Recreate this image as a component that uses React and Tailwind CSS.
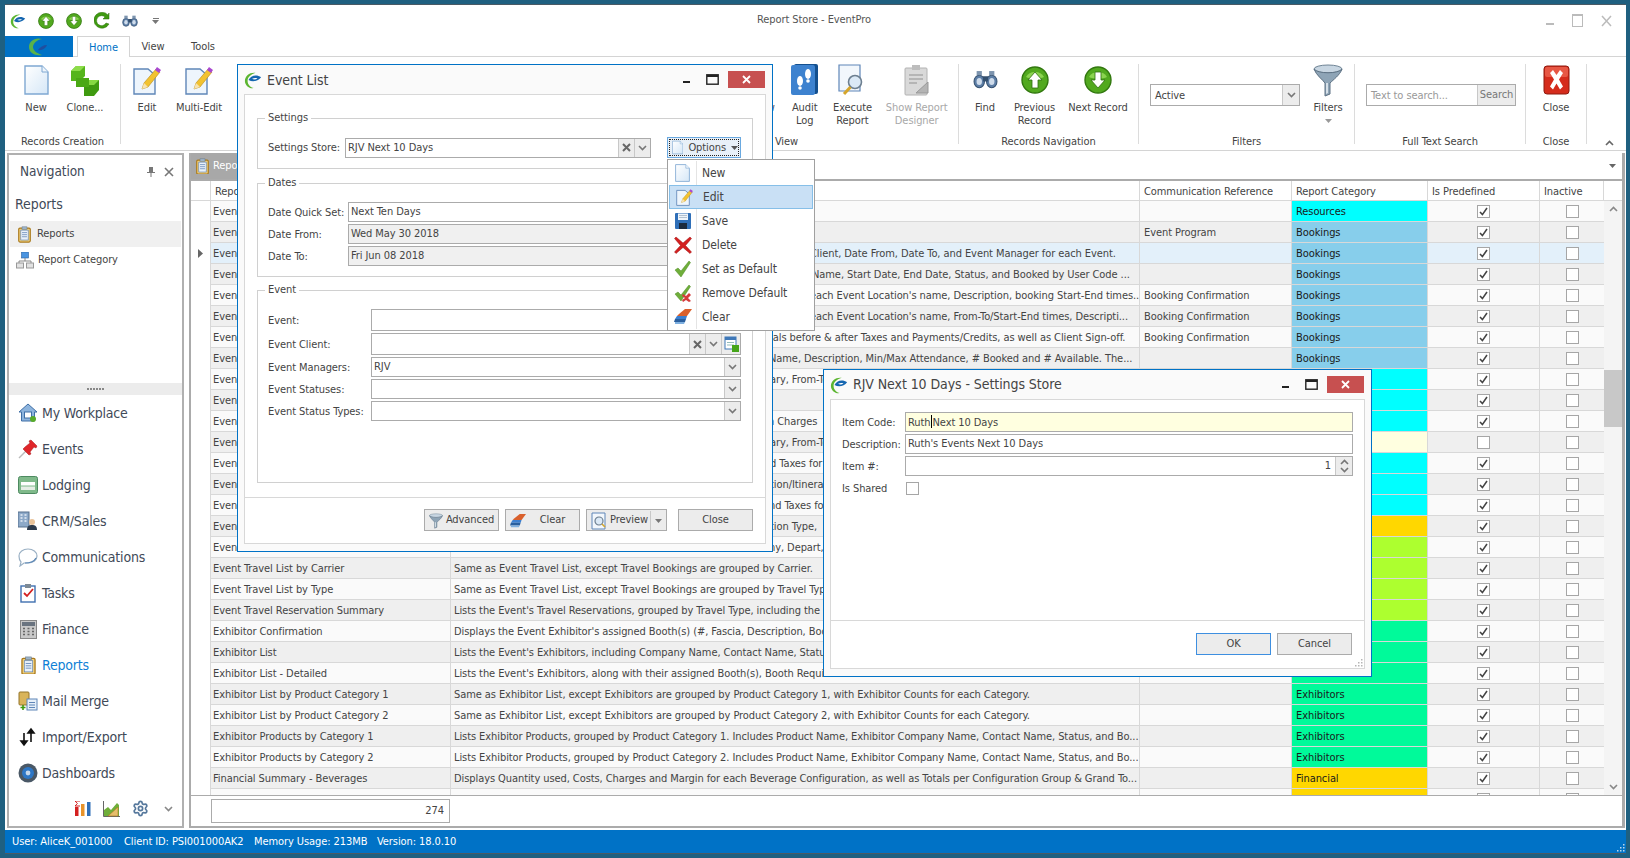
import React from "react";
import { Settings } from "lucide-react";

const Logo = ({ s = 16 }) => (
  <svg width={s} height={s} viewBox="0 0 20 20">
    <path d="M13 2C7 1 1 5 1 11c0 5 5 9 10 8-4-1-7-4-7-8 0-4 3-7 9-9Z" fill="#5cb531" />
    <path d="M5 10c2-5 9-7 14-3-3 4-9 6-14 3Z" fill="#1566b0" />
    <path d="M9 8.500c2-1 4-1 6-.5-2 1.500-4 2-6 .5Z" fill="#fff" />
  </svg>
);
const Chev = ({ c = "#777", up = false }) => (
  <svg width="9" height="6" viewBox="0 0 9 6">
    <path d={up ? "M1 5l3.5-3.5L8 5" : "M1 1l3.5 3.5L8 1"} fill="none" stroke={c} strokeWidth="1.6" />
  </svg>
);
const Caret = ({ c = "#555" }) => (
  <svg width="7" height="4" viewBox="0 0 7 4">
    <path d="M0 0h7L3.5 4Z" fill={c} />
  </svg>
);
const Doc = ({ w = 25, h = 30 }) => (
  <svg width={w} height={h} viewBox="0 0 25 30">
    <defs>
      <linearGradient id="dg" x1="0" y1="0" x2="1" y2="1">
        <stop offset="0" stopColor="#ffffff" />
        <stop offset="1" stopColor="#d5e7f7" />
      </linearGradient>
    </defs>
    <path d="M1 1h17l6 6v22H1Z" fill="url(#dg)" stroke="#7fa8d2" strokeWidth="1.4" />
    <path d="M18 1v6h6" fill="#eef5fc" stroke="#7fa8d2" />
  </svg>
);
const Clone = () => (
  <svg width="30" height="32" viewBox="0 0 30 32">
    <path d="M1 7l5-5h9v10l-5 5H1Z" fill="#55b51c" />
    <path d="M10 7h-9l5-5h9Z" fill="#8ddc4a" />
    <path d="M14 21l5-5h10v10l-5 6H14Z" fill="#3f9a10" />
    <path d="M24 21H14l5-5h10Z" fill="#86d842" />
    <path d="M6 14h13v9H6Z" fill="#4aa815" />
  </svg>
);
const Edit = ({ w = 28, h = 30 }) => (
  <svg width={w} height={h} viewBox="0 0 28 30">
    <path d="M1 4h14l7 6v19H1Z" fill="#eef5fc" stroke="#5f86b8" strokeWidth="1.4" />
    <path d="M9 24l2-6L23 4l4 3-12 15Z" fill="#f2c230" stroke="#b98a15" strokeWidth=".6" />
    <path d="M22 5l2-3 4 3-2 3Z" fill="#a848d0" />
    <path d="M9 24l2-6 4 4Z" fill="#f7e3b0" />
  </svg>
);
const Clip = ({ s = 18 }) => (
  <svg width={s} height={s * 1.1} viewBox="0 0 18 20">
    <rect x="2" y="2.5" width="14" height="17" rx="1.5" fill="#f3d27d" stroke="#a9791c" strokeWidth="1.4" />
    <rect x="4.5" y="5" width="9" height="12" fill="#e9f1fa" stroke="#5e83b5" strokeWidth=".8" />
    <rect x="6" y="1" width="6" height="3" fill="#9db4c9" stroke="#66788a" strokeWidth=".6" />
    <path d="M6 8h6M6 10.5h6M6 13h6" stroke="#5e83b5" strokeWidth=".9" />
  </svg>
);
const Arrow = ({ s = 16, down = false }) => (
  <svg width={s} height={s} viewBox="0 0 28 28">
    <circle cx="14" cy="14" r="13" fill="#52a91f" stroke="#32780f" strokeWidth="1.4" />
    <path d="M5 11a10 9 0 0 1 18 0c-4 2-14 2-18 0Z" fill="#9ade5c" opacity=".8" />
    <path
      d={down ? "M11 6h6v8h4l-7 8-7-8h4Z" : "M11 22h6v-8h4L14 6l-7 8h4Z"}
      fill="#fff"
      stroke="#2f6f10"
      strokeWidth=".8"
    />
  </svg>
);
const Binoc = ({ s = 24 }) => (
  <svg width={s} height={s * 0.75} viewBox="0 0 24 18">
    <ellipse cx="6" cy="11" rx="5" ry="6" fill="#5d7ea6" stroke="#34506f" />
    <ellipse cx="18" cy="11" rx="5" ry="6" fill="#5d7ea6" stroke="#34506f" />
    <ellipse cx="6" cy="11" rx="2.6" ry="3.4" fill="#cfdceb" />
    <ellipse cx="18" cy="11" rx="2.6" ry="3.4" fill="#cfdceb" />
    <rect x="9.5" y="6" width="5" height="5" fill="#34506f" />
    <rect x="3.5" y="1" width="5" height="4" fill="#7d94ae" />
    <rect x="15.5" y="1" width="5" height="4" fill="#7d94ae" />
  </svg>
);
const Funnel = ({ w = 30, h = 33 }) => (
  <svg width={w} height={h} viewBox="0 0 30 33">
    <ellipse cx="15" cy="5" rx="14" ry="4" fill="#c8d6e2" stroke="#6f8495" />
    <path d="M1 5c2 6 9 11 11 14v13l5-2V19c3-3 10-8 12-14-4 5-24 5-28 0Z" fill="#8ea4b6" stroke="#5d7183" />
    <path d="M13 19v11l2-1V19Z" fill="#d6e0e8" />
  </svg>
);
const RedX = () => (
  <svg width="27" height="30" viewBox="0 0 27 30">
    <rect x="1" y="1" width="25" height="28" rx="3" fill="#d52c1c" stroke="#8e1a0f" />
    <rect x="2" y="2" width="23" height="10" rx="2" fill="#ee6a55" opacity=".7" />
    <path d="M7 8l3-3 3.5 5L17 5l3 3-4 6.5 4 7-3 3-3.5-6-3.5 6-3-3 4-7Z" fill="#fff" />
  </svg>
);
const Audit = () => (
  <svg width="27" height="31" viewBox="0 0 27 31">
    <rect x="3" y="0" width="24" height="30" rx="2" fill="#14508f" />
    <rect x="0" y="1" width="24" height="30" rx="2" fill="#3d82cf" />
    <ellipse cx="9" cy="17" rx="3" ry="5" fill="#fff" />
    <circle cx="9" cy="24" r="1.8" fill="#fff" />
    <ellipse cx="17" cy="10" rx="3" ry="5" fill="#fff" />
    <circle cx="17" cy="17" r="1.8" fill="#fff" />
  </svg>
);
const Exec = () => (
  <svg width="28" height="32" viewBox="0 0 28 32">
    <path d="M1 1h21v26H1Z" fill="#f2f7fc" stroke="#5f86b8" strokeWidth="1.2" />
    <circle cx="17" cy="18" r="6.5" fill="#dbe9f6" stroke="#6d7f90" strokeWidth="1.6" />
    <path d="M12.500 23L6 30" stroke="#d5a52b" strokeWidth="3" />
  </svg>
);
const Designer = () => (
  <svg width="26" height="32" viewBox="0 0 26 32">
    <rect x="1" y="4" width="22" height="27" rx="1" fill="#d9d9d9" stroke="#b2b2b2" />
    <rect x="8" y="1" width="8" height="5" fill="#bdbdbd" />
    <path d="M5 11h14M5 15h14M5 19h8" stroke="#a9a9a9" strokeWidth="1.3" />
    <path d="M12 29l12-11v11Z" fill="#b4b4b4" stroke="#999" />
  </svg>
);
const Save = () => (
  <svg width="18" height="18" viewBox="0 0 18 18">
    <rect x="1" y="1" width="16" height="16" rx="1" fill="#2f6fb8" />
    <rect x="4" y="1.5" width="10" height="6.5" fill="#eef4fa" />
    <path d="M5 3.500h8M5 5.500h8" stroke="#9ab" strokeWidth=".7" />
    <rect x="5" y="11" width="8" height="6" fill="#1c2b3e" />
  </svg>
);
const BigX = () => (
  <svg width="18" height="18" viewBox="0 0 18 18">
    <path d="M2 1l7 6 7-6 1.500 1.500-6 7 6 6.500-1.500 1.500-7-6-7 6-1.500-1.500 6-6.500-6-7Z" fill="#d42020" stroke="#9c1010" strokeWidth=".5" />
  </svg>
);
const Check = ({ cross = false }) => (
  <svg width="18" height="18" viewBox="0 0 18 18">
    <path d="M1 10l3-2 3 3 8-10 1.500 1.500L7 17Z" fill="#6fae3a" stroke="#4d8a22" strokeWidth=".5" />
    {cross && <path d="M9 10l3 2 3-3 2 2-3 3 3 3-2 1-3-2-3 2-1-2 3-2-3-2Z" fill="#d43b3b" />}
  </svg>
);
const Eraser = ({ w = 18 }) => (
  <svg width={w} height={w} viewBox="0 0 18 18">
    <path d="M5 6l6-5h7l-5 7H3Z" fill="#d9602c" />
    <path d="M3 8h10l-1 3H1Z" fill="#3b7fd0" />
    <path d="M1 11h11l-1 3H0Z" fill="#2a5f9e" />
    <path d="M1 14h10l-1 2H1Z" fill="#7fb0e0" />
  </svg>
);
const Magnifier = () => (
  <svg width="16" height="18" viewBox="0 0 16 18">
    <path d="M1 1h13v16H1Z" fill="#f2f7fc" stroke="#5f86b8" />
    <circle cx="8" cy="9" r="4" fill="#dbe9f6" stroke="#6d7f90" strokeWidth="1.2" />
    <path d="M11 12l3 3" stroke="#d5a52b" strokeWidth="1.6" />
  </svg>
);
const ClientBtn = () => (
  <svg width="15" height="16" viewBox="0 0 15 16">
    <rect x="1" y="1" width="11" height="12" fill="#fff" stroke="#3f78b8" />
    <rect x="1" y="1" width="11" height="3" fill="#3f78b8" />
    <path d="M3 6.500h7M3 9h7" stroke="#7aa" strokeWidth=".8" />
    <rect x="8" y="9" width="7" height="7" fill="#46a51a" />
  </svg>
);
const Win = ({ c = "#222" }) => (
  <svg width="13" height="11" viewBox="0 0 13 11">
    <rect x=".8" y=".8" width="11.4" height="9.4" fill="none" stroke={c} strokeWidth="1.4" />
    <rect x="1" y="1" width="11" height="2" fill={c} />
  </svg>
);

const House = () => (
  <svg width="20" height="20" viewBox="0 0 20 20">
    <path d="M10 1L1 9h2.500v9h13V9H19Z" fill="#8db4dd" stroke="#3f6fa6" />
    <rect x="6.5" y="9" width="7" height="6" fill="#fff" stroke="#3f6fa6" />
    <circle cx="15" cy="16" r="3" fill="#57ab2a" />
  </svg>
);
const Pin = () => (
  <svg width="20" height="20" viewBox="0 0 20 20">
    <path d="M1 19l7-7" stroke="#bbb" strokeWidth="1.4" />
    <path d="M7 8l5-4-1-2 2-1 6 6-1 2-2-1-4 5 1 2-2 1-6-6Z" fill="#e0262a" stroke="#a81518" strokeWidth=".5" />
  </svg>
);
const Bed = () => (
  <svg width="20" height="18" viewBox="0 0 20 18">
    <rect x=".5" y=".5" width="19" height="17" rx="2" fill="#7fb98a" stroke="#4d8a60" />
    <rect x="3" y="6" width="14" height="3.5" fill="#fff" />
    <rect x="3" y="10.5" width="14" height="3.5" fill="#e6eee6" />
  </svg>
);
const Crm = () => (
  <svg width="20" height="20" viewBox="0 0 20 20">
    <rect x="0" y="1" width="11" height="15" fill="#8da9c8" stroke="#56708e" />
    <path d="M2.500 4h2M6.500 4h2M2.500 7h2M6.500 7h2M2.500 10h2M6.500 10h2" stroke="#e7eef6" strokeWidth="1.4" />
    <circle cx="14" cy="11" r="3" fill="#e9c39a" />
    <path d="M9 19c0-4 2-5 5-5s5 1 5 5Z" fill="#2c3a4c" />
  </svg>
);
const Bubble = () => (
  <svg width="20" height="19" viewBox="0 0 20 19">
    <path d="M10 1c5 0 9 3 9 7s-4 7-9 7H6l-4 3 1-4C1 12 1 10 1 8c0-4 4-7 9-7Z" fill="#fff" stroke="#9ab0c4" strokeWidth="1.2" />
    <path d="M18 10c-2 4-6 5-11 5" fill="none" stroke="#5b87b6" strokeWidth="1.2" />
  </svg>
);
const Task = () => (
  <svg width="18" height="20" viewBox="0 0 18 20">
    <rect x="2" y="3" width="14" height="16" fill="#fff" stroke="#3f6fb0" strokeWidth="1.4" />
    <rect x="6" y="1" width="6" height="4" fill="#7d8a96" />
    <path d="M5 10l3 3 6-7" fill="none" stroke="#d42020" strokeWidth="1.8" />
  </svg>
);
const Calc = () => (
  <svg width="17" height="19" viewBox="0 0 17 19">
    <rect x=".5" y=".5" width="16" height="18" fill="#c9c9c9" stroke="#888" />
    <rect x="2" y="2" width="13" height="4" fill="#6a7480" />
    <path d="M3 8.500h2M7.500 8.500h2M12 8.500h2M3 11.500h2M7.500 11.500h2M12 11.500h2M3 14.500h2M7.500 14.500h2M12 14.500h2" stroke="#666" strokeWidth="1.6" />
  </svg>
);
const MailM = () => (
  <svg width="20" height="20" viewBox="0 0 20 20">
    <rect x="1" y="1" width="10" height="13" rx="1" fill="#d9b45a" stroke="#94752a" />
    <rect x="9" y="8" width="10" height="11" fill="#e5eff9" stroke="#5f86b8" />
    <path d="M11 11.500h6M11 14h6M11 16.500h6" stroke="#5f86b8" />
    <path d="M5 14v5M2.500 16.500h5" stroke="#3f9a10" strokeWidth="1.6" />
  </svg>
);
const ImpExp = () => (
  <svg width="18" height="20" viewBox="0 0 18 20">
    <path d="M5 6v10M2 14l3 4 3-4Z" stroke="#111" strokeWidth="1.6" fill="#111" />
    <path d="M12 15V4M9 6l3-4 3 4Z" stroke="#111" strokeWidth="1.6" fill="#111" />
  </svg>
);
const Dash = () => (
  <svg width="20" height="20" viewBox="0 0 20 20">
    <circle cx="10" cy="10" r="9.5" fill="#4a5866" />
    <circle cx="10" cy="10" r="6" fill="#2e77c6" />
    <circle cx="10" cy="10" r="2.4" fill="#c6d8ec" />
  </svg>
);
const Net = () => (
  <svg width="18" height="17" viewBox="0 0 18 17">
    <rect x="5.5" y="0" width="7" height="6" fill="#4a94e0" stroke="#2a5f9e" strokeWidth=".6" />
    <path d="M9 6v3M3 11V9h12v2" fill="none" stroke="#888" />
    <rect x=".5" y="11" width="7" height="5" fill="#e2e2e2" stroke="#999" />
    <rect x="10.5" y="11" width="7" height="5" fill="#e2e2e2" stroke="#999" />
  </svg>
);
const Bars = () => (
  <svg width="16" height="15" viewBox="0 0 16 15">
    <rect x="0" y="6" width="3.5" height="9" fill="#d42020" />
    <rect x="6" y="3" width="3.5" height="12" fill="#e8932a" />
    <rect x="12" y="1" width="3.5" height="14" fill="#2f6fb8" />
    <path d="M5 0H0l2.400 2.500L0 5h5" fill="none" stroke="#d42020" />
  </svg>
);
const AreaC = () => (
  <svg width="17" height="16" viewBox="0 0 17 16">
    <path d="M.5 0v15.500H17" fill="none" stroke="#666" />
    <path d="M1 15V9l4-3 3 3 6-7 2 2v11Z" fill="#6fae3a" />
    <path d="M5 15l10-9v9Z" fill="#e6bd6b" stroke="#a9791c" strokeWidth=".6" />
  </svg>
);

const Box = ({ on }) => (
  <span className="flex h-[13px] w-[13px] items-center justify-center border border-[#a6a6a6] bg-white">
    {!!on && (
      <svg width="9" height="9" viewBox="0 0 9 9">
        <path d="M1 5l2.400 2.600L8 1" fill="none" stroke="#444" strokeWidth="1.6" />
      </svg>
    )}
  </span>
);

const RibbonBtn = ({ w, icon, l1, l2, gray }) => (
  <div className={`flex flex-col items-center ${w}`}>
    <div className="flex h-[31px] items-center justify-center">{icon}</div>
    <div className={`mt-[6px] text-center leading-[13px] whitespace-nowrap ${gray ? "text-[#a8a8a8]" : "text-[#444]"}`}>
      {l1}
      {l2 && <br />}
      {l2}
    </div>
  </div>
);
const Group = ({ w, label, last, children, cls = "" }) => (
  <div className={`relative flex h-[80px] shrink-0 flex-col ${w} ${last ? "" : "border-r border-[#dcdcdc]"}`}>
    <div className={`flex h-[70px] shrink-0 ${cls}`}>{children}</div>
    <div className="h-[16px] shrink-0 text-center leading-[16px] whitespace-nowrap text-[#444]">{label}</div>
  </div>
);

const Input = ({ w, h = "h-[20px]", bg = "bg-white", text, children, yellow }) => (
  <div className={`flex shrink-0 items-stretch border border-[#ababab] ${w} ${h} ${yellow ? "bg-[#ffffe0]" : bg}`}>
    <div className="flex-1 overflow-hidden pl-[2px] leading-[18px] whitespace-nowrap text-[#444]">{text}</div>
    {children}
  </div>
);
const SideBtn = ({ w = "w-[16px]", children }) => (
  <div className={`flex shrink-0 items-center justify-center border-l border-[#c8c8c8] bg-[#ececec] ${w}`}>{children}</div>
);
const XGlyph = () => (
  <svg width="9" height="9" viewBox="0 0 9 9">
    <path d="M1 1l7 7M8 1L1 8" stroke="#666" strokeWidth="2" />
  </svg>
);
const Row = ({ lab, lw, children, gap = "mb-[2px]" }) => (
  <div className={`flex items-center ${gap}`}>
    <div className={`shrink-0 pt-[2px] whitespace-nowrap text-[#444] ${lw}`}>{lab}</div>
    {children}
  </div>
);
const GroupBox = ({ title, cls, children }) => (
  <div className={`relative mx-[12px] border border-[#d0d0d0] pl-[10px] ${cls}`}>
    <div className="absolute top-[-8px] left-[7px] bg-white px-[3px] leading-[14px] text-[#444]">{title}</div>
    {children}
  </div>
);
const Btn = ({ w, children, blue }) => (
  <div className={`flex h-[22px] items-center justify-center border bg-[#ececec] pt-[1px] text-[#444] ${w} ${blue ? "border-[#3e8fe0]" : "border-[#ababab]"}`}>
    {children}
  </div>
);
const DlgHead = ({ title, tx = "pl-[6px]", ty = "pt-[1px]" }) => (
  <div className={`flex h-[29px] shrink-0 items-center ${tx}`}>
    <Logo s={18} />
    <span className={`ml-[5px] text-[14px] text-[#444] ${ty}`}>{title}</span>
    <div className="ml-auto flex items-center pr-[7px]">
      <span className="mt-[5px] h-[2px] w-[7px] bg-[#222]" />
      <span className="ml-[16px]"><Win /></span>
      <span className="ml-[9px] flex h-[17px] w-[37px] items-center justify-center bg-[#c75050]">
        <svg width="9" height="9" viewBox="0 0 9 9">
          <path d="M1 1l7 7M8 1L1 8" stroke="#fff" strokeWidth="1.8" />
        </svg>
      </span>
    </div>
  </div>
);
const Grip = () => (
  <svg className="absolute right-[1px] bottom-[1px]" width="9" height="9" viewBox="0 0 9 9">
    <path d="M7 1h1.500v1.500H7ZM4 4h1.500v1.500H4ZM7 4h1.500v1.500H7ZM1 7h1.500v1.500H1ZM4 7h1.500v1.500H4ZM7 7h1.500v1.500H7Z" fill="#b5b5b5" />
  </svg>
);

const C = "bg-[#00ffff]";
const B = "bg-[#87ceeb]";
const Y = "bg-[#ffffe0]";
const O = "bg-[#ffd700]";
const G = "bg-[#adff2f]";
const S = "bg-[#00fa9a]";

const rows = [
  ["Event Assigned Resources", "Lists the Resources assigned to the Event.", "", "", C, "Resources", 1],
  ["Event Agenda", "Displays the Event Program with Location and Times.", "", "Event Program", B, "Bookings", 1],
  ["Event Booking List", "Client, Date From, Date To, and Event Manager for each Event.", "pl-[359px]", "", B, "Bookings", 1],
  ["Event Booking List - Detail", "Name, Start Date, End Date, Status, and Booked by User Code ...", "pl-[361px]", "", B, "Bookings", 1],
  ["Event Confirmation", "each Event Location's name, Description, booking Start-End times...", "pl-[359px]", "Booking Confirmation", B, "Bookings", 1],
  ["Event Confirmation - Detail", "each Event Location's name, From-To/Start-End times, Descripti...", "pl-[359px]", "Booking Confirmation", B, "Bookings", 1],
  ["Event Contract", "tals before & after Taxes and Payments/Credits, as well as Client Sign-off.", "pl-[318px]", "Booking Confirmation", B, "Bookings", 1],
  ["Event Locations", "Name, Description, Min/Max Attendance, # Booked and # Available. The...", "pl-[318px]", "", B, "Bookings", 1],
  ["Event Details", "ary, From-To", "pl-[319px]", "", C, "Resources", 1],
  ["Event Details by Date", "", "", "", C, "Resources", 1],
  ["Event Expenses", "h Charges", "pl-[317px]", "", C, "Resources", 1],
  ["Event Itinerary", "ary, From-To", "pl-[319px]", "", Y, "", 0],
  ["Event Summary", "d Taxes for", "pl-[319px]", "", C, "Resources", 1],
  ["Event Schedule", "tion/Itinerary", "pl-[319px]", "", C, "Resources", 1],
  ["Event Statement", "nd Taxes for", "pl-[318px]", "", C, "Resources", 1],
  ["Event Travel", "tion Type,", "pl-[319px]", "", O, "Financial", 1],
  ["Event Travel List", "ny, Depart,", "pl-[318px]", "", G, "Travel", 1],
  ["Event Travel List by Carrier", "Same as Event Travel List, except Travel Bookings are grouped by Carrier.", "", "", G, "Travel", 1],
  ["Event Travel List by Type", "Same as Event Travel List, except Travel Bookings are grouped by Travel Type.", "", "", G, "Travel", 1],
  ["Event Travel Reservation Summary", "Lists the Event's Travel Reservations, grouped by Travel Type, including the Carrier and Dates.", "", "", G, "Travel", 1],
  ["Exhibitor Confirmation", "Displays the Event Exhibitor's assigned Booth(s) (#, Fascia, Description, Booth Requirements).", "", "", S, "Exhibitors", 1],
  ["Exhibitor List", "Lists the Event's Exhibitors, including Company Name, Contact Name, Status and Booths.", "", "", S, "Exhibitors", 1],
  ["Exhibitor List - Detailed", "Lists the Event's Exhibitors, along with their assigned Booth(s), Booth Requirements and Status.", "", "", S, "Exhibitors", 1],
  ["Exhibitor List by Product Category 1", "Same as Exhibitor List, except Exhibitors are grouped by Product Category 1, with Exhibitor Counts for each Category.", "", "", S, "Exhibitors", 1],
  ["Exhibitor List by Product Category 2", "Same as Exhibitor List, except Exhibitors are grouped by Product Category 2, with Exhibitor Counts for each Category.", "", "", S, "Exhibitors", 1],
  ["Exhibitor Products by Category 1", "Lists Exhibitor Products, grouped by Product Category 1. Includes Product Name, Exhibitor Company Name, Contact Name, Status, and Bo...", "", "", S, "Exhibitors", 1],
  ["Exhibitor Products by Category 2", "Lists Exhibitor Products, grouped by Product Category 2. Includes Product Name, Exhibitor Company Name, Contact Name, Status, and Bo...", "", "", S, "Exhibitors", 1],
  ["Financial Summary - Beverages", "Displays Quantity used, Costs, Charges and Margin for each Beverage Configuration, as well as Totals per Configuration Group & Grand To...", "", "", O, "Financial", 1],
  ["Financial Summary - Charges", "Displays Quantity used, Costs, Charges and Margin for each Charge Configuration, as well as Totals per Configuration Group & Grand To...", "", "", O, "Financial", 1],
];

const menu = [
  [<Doc w={15} h={18} />, "New"],
  [<Edit w={17} h={18} />, "Edit", true],
  [<Save />, "Save"],
  [<BigX />, "Delete"],
  [<Check />, "Set as Default"],
  [<Check cross />, "Remove Default"],
  [<Eraser />, "Clear"],
];

const navItems = [
  [<House />, "My Workplace"],
  [<Pin />, "Events"],
  [<Bed />, "Lodging"],
  [<Crm />, "CRM/Sales"],
  [<Bubble />, "Communications"],
  [<Task />, "Tasks"],
  [<Calc />, "Finance"],
  [<Clip s={17} />, "Reports", true],
  [<MailM />, "Mail Merge"],
  [<ImpExp />, "Import/Export"],
  [<Dash />, "Dashboards"],
];

const Head = ({ w, t }) => (
  <div className={`shrink-0 overflow-hidden border-r border-[#d8d8d8] pl-[4px] leading-[21px] whitespace-nowrap text-[#444] ${w}`}>{t}</div>
);

export default function App() {
  return (
    <div className="relative h-[858px] w-[1630px] overflow-hidden bg-[#1f6080] pt-[4px] pr-[4px] pb-[4px] pl-[5px] font-['DejaVu_Sans_Condensed','DejaVu_Sans',sans-serif] text-[11px] tracking-[-0.08px]">
      <div className="flex h-full flex-col border-y border-[#4a5a64] bg-white">
        {/* title bar */}
        <div className="grid h-[31px] shrink-0 grid-cols-[1fr_auto_1fr] items-center">
          <div className="flex items-center gap-[12px] pl-[5px]">
            <Logo s={16} />
            <Arrow s={16} />
            <Arrow s={16} down />
            <svg width="16" height="18" viewBox="0 0 16 18">
              <path d="M14 3a8 8 0 1 0 1 9l-3-1a5 5 0 1 1-1-6l-2 2h6V1Z" fill="#3f9a10" stroke="#2a6f0a" strokeWidth=".5" />
            </svg>
            <Binoc s={16} />
            <span className="ml-[2px] flex flex-col items-center gap-[1px]">
              <span className="h-[1px] w-[6px] bg-[#777]" />
              <Caret c="#777" />
            </span>
          </div>
          <div className="mr-[3px] text-[#555]">Report Store - EventPro</div>
          <div className="flex items-center justify-end gap-[18px] pr-[14px]">
            <span className="mt-[7px] h-[2px] w-[8px] bg-[#bbb]" />
            <svg width="11" height="13" viewBox="0 0 11 13"><rect x=".5" y=".5" width="10" height="12" fill="none" stroke="#bbb" /><rect x="0" y="0" width="11" height="2" fill="#bbb" /></svg>
            <svg width="11" height="12" viewBox="0 0 11 12"><path d="M1 1l9 10M10 1L1 11" stroke="#bbb" strokeWidth="1.5" /></svg>
          </div>
        </div>
        {/* tabs */}
        <div className="flex h-[21px] shrink-0 border-b border-[#d4d4d4] text-[#444]">
          <div className="flex h-[21px] w-[68px] items-center justify-center bg-[#0072c6]">
            <svg width="24" height="18" viewBox="0 0 24 18">
              <path d="M15 1C8-1 2 3 2 9s6 9 13 8C9 15 6 12 6 9s3-7 9-8Z" fill="#59b24a" />
              <path d="M11 12c2-3 5-5 9-5-1 3-5 6-9 5Z" fill="#1f4fa0" />
            </svg>
          </div>
          <div className="z-10 ml-[4px] flex h-[21px] w-[53px] items-center justify-center border-x border-t border-[#d4d4d4] bg-white pt-[3px] text-[#0072c6]">Home</div>
          <div className="flex w-[46px] items-center justify-center pt-[3px]">View</div>
          <div className="flex w-[54px] items-center justify-center pt-[3px]">Tools</div>
        </div>
        {/* ribbon */}
        <div className="flex h-[94px] shrink-0 border-b border-[#d4d4d4] pt-[7px]">
          <Group w="w-[116px]" label="Records Creation" cls="pl-[7px]">
            <RibbonBtn w="w-[48px]" icon={<Doc />} l1="New" />
            <RibbonBtn w="w-[50px]" icon={<Clone />} l1="Clone..." />
          </Group>
          <Group w="w-[494px]" label="Records" cls="pl-[6px]">
            <RibbonBtn w="w-[40px]" icon={<Edit />} l1="Edit" />
            <RibbonBtn w="w-[64px]" icon={<Edit />} l1="Multi-Edit" />
            <div className="ml-[3px]">
              <RibbonBtn w="w-[50px]" icon={<Doc />} l1="Import" l2="Settings" />
            </div>
          </Group>
          <Group w="w-[344px]" label="View" cls="pl-[117px]">
            <RibbonBtn w="w-[48px]" icon={<Doc />} l1="Preview" />
            <RibbonBtn w="w-[50px]" icon={<Audit />} l1="Audit" l2="Log" />
            <RibbonBtn w="w-[46px]" icon={<Exec />} l1="Execute" l2="Report" />
            <RibbonBtn w="w-[83px]" icon={<Designer />} l1="Show Report" l2="Designer" gray />
          </Group>
          <Group w="w-[180px]" label="Records Navigation" cls="pl-[4px]">
            <RibbonBtn w="w-[44px]" icon={<Binoc s={25} />} l1="Find" />
            <RibbonBtn w="w-[55px]" icon={<Arrow s={28} />} l1="Previous" l2="Record" />
            <RibbonBtn w="w-[72px]" icon={<Arrow s={28} down />} l1="Next Record" />
          </Group>
          <Group w="w-[216px]" label="Filters" cls="pl-[11px]">
            <div className="mt-[20px]">
              <Input w="w-[150px]" h="h-[22px]" text={<span className="ml-[2px] leading-[21px]">Active</span>}>
                <SideBtn w="w-[17px]"><Chev /></SideBtn>
              </Input>
            </div>
            <div className="ml-[6px] flex w-[44px] flex-col items-center">
              <Funnel />
              <div className="mt-[4px] leading-[13px] text-[#444]">Filters</div>
              <div className="mt-[5px]"><Caret c="#999" /></div>
            </div>
          </Group>
          <Group w="w-[171px]" label="Full Text Search" cls="pl-[11px]">
            <div className="mt-[20px] flex h-[22px] w-[150px] border border-[#ababab]">
              <div className="flex-1 pl-[4px] leading-[21px] text-[#999]">Text to search...</div>
              <div className="flex w-[38px] items-center justify-center border-l border-[#c8c8c8] bg-[#ececec] text-[#777]">Search</div>
            </div>
          </Group>
          <Group w="w-[61px]" label="Close" cls="justify-center">
            <RibbonBtn w="w-[50px]" icon={<RedX />} l1="Close" />
          </Group>
          <div className="flex flex-1 items-end pb-[4px] pl-[18px]">
            <Chev up c="#666" />
          </div>
        </div>
        {/* content */}
        <div className="flex min-h-0 flex-1 py-[2px]">
          <div className="ml-[2px] flex w-[177px] shrink-0 flex-col border-2 border-[#b0b0b0] text-[#444]">
            <div className="flex h-[33px] shrink-0 items-center pr-[8px] pl-[11px]">
              <span className="text-[13.5px] text-[#3f4a58]">Navigation</span>
              <svg className="mr-[9px] ml-auto" width="8" height="10" viewBox="0 0 8 10"><path d="M2 0h4v5h2v1H4.500v4h-1V6H0V5h2Z" fill="#777" /></svg>
              <svg width="10" height="10" viewBox="0 0 10 10"><path d="M1 1l8 8M9 1L1 9" stroke="#777" strokeWidth="1.6" /></svg>
            </div>
            <div className="flex h-[33px] shrink-0 items-center pl-[6px] text-[14px] text-[#3f4a58]">Reports</div>
            <div className="mx-[1px] flex h-[26px] shrink-0 items-center bg-[#f0f0f0] pt-[1px] pl-[7px]">
              <Clip s={15} /><span className="ml-[5px]">Reports</span>
            </div>
            <div className="mx-[1px] flex h-[26px] shrink-0 items-center pt-[1px] pl-[6px]">
              <Net /><span className="ml-[4px]">Report Category</span>
            </div>
            <div className="flex-1" />
            <div className="flex h-[12px] shrink-0 items-center justify-center gap-[1px] bg-[#ececec]">
              {[0, 1, 2, 3, 4, 5].map((i) => (
                <span key={i} className="h-[2px] w-[2px] bg-[#888]" />
              ))}
            </div>
            {navItems.map(([ic, t, on]) => (
              <div key={t} className="flex h-[36px] shrink-0 items-center pl-[9px]">
                <span className="flex w-[20px] justify-center">{ic}</span>
                <span className={`ml-[4px] text-[14px] tracking-[-0.2px] ${on ? "text-[#0f7fd6]" : "text-[#3f4a58]"}`}>{t}</span>
              </div>
            ))}
            <div className="flex h-[35px] shrink-0 items-center justify-end gap-[12px] pr-[9px]">
              <Bars />
              <AreaC />
              <Settings size={17} color="#56789c" strokeWidth={2.4} />
              <span className="ml-[3px]"><Chev c="#888" /></span>
            </div>
          </div>
          {/* grid panel */}
          <div className="ml-[5px] flex w-[1436px] shrink-0 flex-col border-r-[3px] border-b-2 border-l-2 border-[#ababab] text-[#444]">
            <div className="flex h-[26px] shrink-0 items-center justify-between">
              <div className="flex h-full w-[110px] items-center bg-[#a8a8a8] pl-[4px] text-white">
                <Clip s={15} /><span className="ml-[3px]">Reports</span>
              </div>
              <span className="pr-[6px]"><Caret c="#666" /></span>
            </div>
            <div className="flex h-[22px] shrink-0 border-t-2 border-b border-t-[#ababab] border-b-[#d8d8d8] bg-white">
              <Head w="w-[20px]" t="" />
              <Head w="w-[240px]" t="Report Name" />
              <Head w="w-[689px]" t="Description" />
              <Head w="w-[152px]" t="Communication Reference" />
              <Head w="w-[136px]" t="Report Category" />
              <Head w="w-[112px]" t="Is Predefined" />
              <Head w="w-[64px]" t="Inactive" />
            </div>
            <div className="flex h-[594px] shrink-0 overflow-hidden">
              <div className="flex w-[20px] shrink-0 flex-col items-center border-r border-[#d8d8d8]">
                <div className="flex h-[42px] shrink-0" />
                <div className="flex h-[21px] shrink-0 items-center">
                  <svg width="5" height="9" viewBox="0 0 5 9"><path d="M0 0l5 4.500L0 9Z" fill="#666" /></svg>
                </div>
              </div>
              <div className="flex w-[1393px] shrink-0 flex-col">
                {rows.map(([name, desc, pad, comm, cat, catName, pre], i) => (
                  <div
                    key={name}
                    className={`flex h-[21px] shrink-0 border-b border-[#d8d8d8] leading-[22px] whitespace-nowrap ${i === 2 ? "bg-[#e3f0fa]" : i % 2 ? "bg-[#efefef]" : "bg-[#fafafa]"}`}
                  >
                    <div className="w-[240px] shrink-0 overflow-hidden border-r border-[#d8d8d8] pl-[2px]">{name}</div>
                    <div className={`w-[689px] shrink-0 overflow-hidden border-r border-[#d8d8d8] pl-[3px] ${pad}`}>{desc}</div>
                    <div className="w-[152px] shrink-0 overflow-hidden border-r border-[#d8d8d8] pl-[4px]">{comm}</div>
                    <div className={`w-[136px] shrink-0 overflow-hidden border-r border-[#d8d8d8] pl-[4px] text-[#1a1a1a] ${cat}`}>{catName}</div>
                    <div className="flex w-[112px] shrink-0 items-center justify-center border-r border-[#d8d8d8]"><Box on={pre} /></div>
                    <div className="flex w-[64px] shrink-0 items-center justify-center"><Box /></div>
                  </div>
                ))}
              </div>
              <div className="flex w-[18px] shrink-0 flex-col items-center bg-[#f4f4f4]">
                <div className="mt-[5px] h-[6px]"><Chev up c="#888" /></div>
                <div className="mt-[158px] h-[57px] w-full shrink-0 bg-[#c8c8c8]" />
                <div className="mt-auto mb-[5px] h-[6px]"><Chev c="#888" /></div>
              </div>
            </div>
            <div className="flex flex-1 items-center border-t border-[#ababab] pl-[20px]">
              <div className="flex h-[24px] w-[239px] items-center justify-end border border-[#ababab] pr-[5px]">274</div>
            </div>
          </div>
        </div>
        {/* status */}
        <div className="relative flex h-[23px] shrink-0 items-center bg-[#0072c6] pt-[2px] pl-[7px] whitespace-nowrap text-white">
          <span className="w-[112px] shrink-0">User: AliceK_001000</span>
          <span className="w-[130px] shrink-0">Client ID: PSI001000AK2</span>
          <span className="w-[123px] shrink-0">Memory Usage: 213MB</span>
          <span>Version: 18.0.10</span>
          <svg className="absolute right-[1px] bottom-[1px]" width="9" height="9" viewBox="0 0 9 9">
            <path d="M7 1h1.500v1.500H7ZM4 4h1.500v1.500H4ZM7 4h1.500v1.500H7ZM1 7h1.500v1.500H1ZM4 7h1.500v1.500H4ZM7 7h1.500v1.500H7Z" fill="#bcd6ea" />
          </svg>
        </div>
      </div>

      {/* Event List dialog */}
      <div className="absolute top-[64px] left-[237px] flex h-[488px] w-[536px] flex-col border border-[#0072c6] bg-[#fafafa]">
        <DlgHead title="Event List" />
        <div className="mr-[6px] mb-[7px] ml-[6px] flex flex-1 flex-col border border-[#d8d8d8] bg-white">
          <GroupBox title="Settings" cls="mt-[23px] h-[51px] pt-[18px]">
            <Row lab="Settings Store:" lw="w-[77px]" gap="">
              <Input w="w-[306px]" text="RJV Next 10 Days">
                <SideBtn><XGlyph /></SideBtn>
                <SideBtn><Chev /></SideBtn>
              </Input>
              <div className="ml-[16px] flex h-[21px] w-[74px] items-center border border-[#6aa9e0] bg-[#e8f0f8] p-[1px]">
                <div className="flex h-full w-full items-center border border-dotted border-[#222] pl-[2px] text-[#444]">
                  <Doc w={12} h={15} />
                  <span className="ml-[5px] pt-[2px]">Options</span>
                  <span className="ml-[5px]"><Caret /></span>
                </div>
              </div>
            </Row>
          </GroupBox>
          <GroupBox title="Dates" cls="mt-[14px] h-[94px] pt-[18px]">
            <Row lab="Date Quick Set:" lw="w-[80px]"><Input w="w-[393px]" text="Next Ten Days" /></Row>
            <Row lab="Date From:" lw="w-[80px]"><Input w="w-[393px]" bg="bg-[#f0f0f0]" text="Wed May 30 2018" /></Row>
            <Row lab="Date To:" lw="w-[80px]"><Input w="w-[393px]" bg="bg-[#f0f0f0]" text="Fri Jun 08 2018" /></Row>
          </GroupBox>
          <GroupBox title="Event" cls="mt-[13px] h-[193px] pt-[18px]">
            <Row lab="Event:" lw="w-[103px]"><Input w="w-[370px]" h="h-[22px]" /></Row>
            <Row lab="Event Client:" lw="w-[103px]">
              <Input w="w-[370px]" h="h-[22px]">
                <SideBtn><XGlyph /></SideBtn>
                <SideBtn><Chev /></SideBtn>
                <SideBtn w="w-[19px]"><ClientBtn /></SideBtn>
              </Input>
            </Row>
            <Row lab="Event Managers:" lw="w-[103px]"><Input w="w-[370px]" text="RJV"><SideBtn><Chev /></SideBtn></Input></Row>
            <Row lab="Event Statuses:" lw="w-[103px]"><Input w="w-[370px]"><SideBtn><Chev /></SideBtn></Input></Row>
            <Row lab="Event Status Types:" lw="w-[103px]"><Input w="w-[370px]"><SideBtn><Chev /></SideBtn></Input></Row>
          </GroupBox>
          <div className="mt-[14px] flex flex-1 items-start justify-end border-t border-[#d8d8d8] pt-[11px] pr-[12px]">
            <Btn w="w-[75px]"><Funnel w={14} h={16} /><span className="ml-[3px]">Advanced</span></Btn>
            <div className="ml-[6px]"><Btn w="w-[75px]"><span className="mr-[14px]"><Eraser w={16} /></span>Clear<span className="w-[10px]" /></Btn></div>
            <div className="ml-[6px] flex h-[22px] w-[81px] border border-[#ababab] bg-[#ececec] pt-[1px] text-[#444]">
              <div className="flex flex-1 items-center pl-[4px]"><Magnifier /><span className="ml-[3px]">Preview</span></div>
              <div className="flex w-[16px] items-center justify-center border-l border-[#c8c8c8]"><Caret c="#777" /></div>
            </div>
            <div className="ml-[11px]"><Btn w="w-[75px]">Close</Btn></div>
          </div>
        </div>
      </div>

      {/* Options menu */}
      <div className="absolute top-[159px] left-[667px] h-[172px] w-[148px] border border-[#a0a0a0] bg-white pt-[1px] text-[12px] tracking-[-0.1px] text-[#444]">
        {menu.map(([ic, t, on]) => (
          <div key={t} className={`mx-[1px] flex h-[24px] items-center ${on ? "border border-[#86bfe8] bg-[#c9e0f5]" : ""}`}>
            <span className={`flex h-full w-[28px] shrink-0 items-center justify-center ${on ? "" : "border-r border-[#e4e4e4]"}`}>{ic}</span>
            <span className="ml-[5px]">{t}</span>
          </div>
        ))}
      </div>

      {/* Settings Store dialog */}
      <div className="absolute top-[369px] left-[823px] flex h-[308px] w-[549px] flex-col border border-[#0072c6] bg-[#fafafa]">
        <DlgHead title="RJV Next 10 Days - Settings Store" tx="pl-[6px]" ty="" />
        <div className="relative mr-[6px] mb-[7px] ml-[6px] flex flex-1 flex-col border border-[#d8d8d8] bg-white">
          <div className="flex-1 pt-[12px] pl-[11px]">
            <Row lab="Item Code:" lw="w-[63px]">
              <Input w="w-[448px]" yellow text={<span>Ruth<span className="mx-[0.5px] inline-block h-[13px] w-[1px] translate-y-[2px] bg-black" />Next 10 Days</span>} />
            </Row>
            <Row lab="Description:" lw="w-[63px]"><Input w="w-[448px]" text="Ruth's Events Next 10 Days" /></Row>
            <Row lab="Item #:" lw="w-[63px]">
              <Input w="w-[448px]" text={<div className="pr-[4px] text-right">1</div>}>
                <div className="flex w-[17px] flex-col items-center justify-center gap-[2px] border-l border-[#c8c8c8] bg-[#ececec]">
                  <Chev up /><Chev />
                </div>
              </Input>
            </Row>
            <Row lab="Is Shared" lw="w-[64px]" gap="mt-[3px]"><Box /></Row>
          </div>
          <div className="flex h-[48px] shrink-0 items-start justify-end gap-[6px] border-t border-[#d8d8d8] pt-[12px] pr-[12px]">
            <Btn w="w-[75px]" blue>OK</Btn>
            <Btn w="w-[75px]">Cancel</Btn>
          </div>
          <Grip />
        </div>
      </div>
    </div>
  );
}
